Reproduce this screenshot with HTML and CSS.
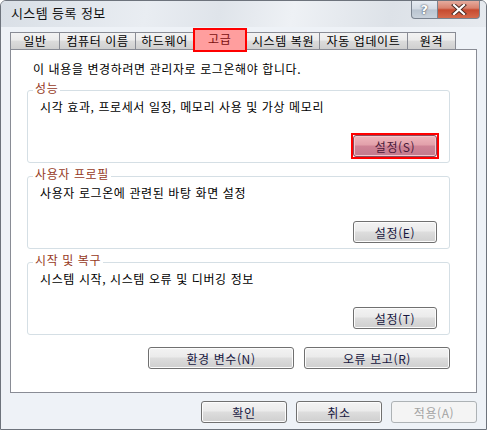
FILE: index.html
```html
<!DOCTYPE html>
<html lang="ko">
<head>
  <meta charset="UTF-8" />
  <title>시스템 등록 정보</title>
  <link rel="stylesheet" href="styles.css">
</head>
<body>
  <div class="window">
    <div class="titlebar">
      <span class="title">시스템 등록 정보</span>
      <div class="caption">
        <div class="cap-btn cap-help">?</div>
        <div class="cap-btn cap-close">
          <svg width="16" height="11" viewBox="0 0 16 11">
            <path d="M3 1 L13 10 M13 1 L3 10" stroke="#4a2a22" stroke-width="4" stroke-linecap="square" fill="none"/>
            <path d="M3 1 L13 10 M13 1 L3 10" stroke="#fff" stroke-width="2.2" stroke-linecap="square" fill="none"/>
          </svg>
        </div>
      </div>
    </div>

    <div class="client">
      <div class="tabs">
        <div class="tab w1">일반</div>
        <div class="tab w2">컴퓨터 이름</div>
        <div class="tab w3">하드웨어</div>
        <div class="tab w4 active">고급</div>
        <div class="tab w5">시스템 복원</div>
        <div class="tab w6">자동 업데이트</div>
        <div class="tab w7">원격</div>
      </div>

      <div class="panel">
        <div class="intro">이 내용을 변경하려면 관리자로 로그온해야 합니다.</div>

        <div class="group">
          <div class="group-title">성능</div>
          <div class="group-text">시각 효과, 프로세서 일정, 메모리 사용 및 가상 메모리</div>
          <div class="group-actions">
            <span class="focus-ring"><button class="btn btn-hot">설정(S)</button></span>
          </div>
        </div>

        <div class="group">
          <div class="group-title">사용자 프로필</div>
          <div class="group-text">사용자 로그온에 관련된 바탕 화면 설정</div>
          <div class="group-actions">
            <button class="btn">설정(E)</button>
          </div>
        </div>

        <div class="group">
          <div class="group-title">시작 및 복구</div>
          <div class="group-text">시스템 시작, 시스템 오류 및 디버깅 정보</div>
          <div class="group-actions">
            <button class="btn">설정(T)</button>
          </div>
        </div>

        <div class="panel-actions">
          <button class="btn btn-wide">환경 변수(N)</button>
          <button class="btn btn-wide">오류 보고(R)</button>
        </div>
      </div>

      <div class="footer">
        <button class="btn btn-dlg">확인</button>
        <button class="btn btn-dlg">취소</button>
        <button class="btn btn-dlg" disabled>적용(A)</button>
      </div>
    </div>
  </div>
</body>
</html>
```

FILE: styles.css
```css
* {
  box-sizing: border-box;
}
body {
  margin: 0;
  background: #ffffff;
  font-family: "Noto Sans CJK KR", "DejaVu Sans", sans-serif;
  font-size: 12px;
  letter-spacing: 0.6px;
  color: #000;
}

.window {
  width: 487px;
  height: 430px;
  border: 1px solid #6d737c;
  border-radius: 6px 6px 0 0;
  background: #eef2f7;
  overflow: hidden;
}

.titlebar {
  height: 26px;
  display: flex;
  justify-content: space-between;
  align-items: flex-start;
  background: linear-gradient(100deg, #d9dfe6 0%, #e9edf2 30%, #dfe4ea 45%, #eef1f5 60%, #dde2e8 80%, #e6eaef 100%);
}
.title {
  padding: 4px 0 0 10px;
  line-height: 16px;
  font-size: 13px;
  letter-spacing: 0.4px;
  color: #111;
}
.caption {
  display: flex;
  margin-right: 6px;
  margin-top: -1px;
}
.cap-btn {
  height: 19px;
  display: flex;
  align-items: center;
  justify-content: center;
  border: 1px solid #7a838f;
  border-top: none;
}
.cap-help {
  width: 27px;
  border-radius: 0 0 0 4px;
  background: linear-gradient(#e9eef4 0%, #d3dbe4 50%, #b9c4d0 55%, #c9d2dc 100%);
  color: #fff;
  font-family: "DejaVu Sans", sans-serif;
  font-weight: bold;
  font-size: 13px;
  text-shadow: 0 0 2px #4b5563, 0 0 1px #4b5563;
}
.cap-close {
  width: 42px;
  border-left: none;
  border-radius: 0 0 4px 0;
  background: linear-gradient(#e7b1a4 0%, #d9826e 45%, #c64a2f 55%, #d66a4c 100%);
}

.client {
  padding: 5px 9px 0 9px;
}

.tabs {
  display: flex;
  height: 17px;
  position: relative;
  z-index: 1;
}
.tab {
  height: 17px;
  margin-right: -1px;
  border: 1px solid #898c95;
  border-bottom: none;
  background: linear-gradient(#f3f3f3 0%, #ebebeb 45%, #dcdcdc 50%, #cfcfcf 100%);
  line-height: 16px;
  text-align: center;
  white-space: nowrap;
}
.w1 { width: 50px; }
.w2 { width: 77px; }
.w3 { width: 59px; }
.w4 { width: 54px; }
.w5 { width: 74px; }
.w6 { width: 89px; }
.w7 { width: 49px; }
.tab.active {
  height: 24px;
  margin-top: -4px;
  border: 2px solid #ff0000;
  background: #ff9e9e;
  color: #7a1010;
  line-height: 18px;
  text-align: left;
  padding-left: 13px;
  position: relative;
  z-index: 2;
}

.panel {
  height: 344px;
  border: 1px solid #898c95;
  background: #ffffff;
  padding: 11px 0 0 16px;
}
.intro {
  line-height: 16px;
  padding-left: 6px;
}

.group {
  width: 423px;
  margin-top: 13px;
  border: 1px solid #d5dfe5;
  border-radius: 3px;
  padding: 0 12px 5px 12px;
}
.group-title {
  width: fit-content;
  margin: -11px 0 0 -7px;
  padding: 0 2px;
  background: #fff;
  color: #96391d;
  line-height: 16px;
}
.group-text {
  margin-top: 3px;
  line-height: 16px;
}
.group-actions {
  display: flex;
  justify-content: flex-end;
  margin-top: 20px;
}

.btn {
  height: 22px;
  width: 84px;
  padding: 0;
  border: 1px solid #707070;
  border-radius: 3px;
  background: linear-gradient(#f3f3f3 0%, #ebebeb 45%, #dddddd 50%, #cfcfcf 100%);
  box-shadow: inset 0 0 0 1px #fcfcfc;
  font-family: "Noto Sans CJK KR", "DejaVu Sans", sans-serif;
  font-size: 12px;
  letter-spacing: 0.6px;
  color: #17173f;
}
.btn:disabled {
  border-color: #adb2b5;
  background: #f4f4f4;
  box-shadow: none;
  color: #a3a3a3;
}
.focus-ring {
  display: flex;
  margin: -2px -2px -2px 0;
  border: 2px solid #ff0000;
}
.btn-hot {
  border-color: #8a4a5c;
  background: linear-gradient(#efb6bc 0%, #e2a0aa 45%, #cf8496 50%, #c27a8e 100%);
  box-shadow: inset 0 0 0 1px #f4c8cc;
  color: #4a1a3a;
}

.panel-actions {
  width: 423px;
  display: flex;
  justify-content: flex-end;
  gap: 10px;
  margin-top: 12px;
}
.btn-wide {
  width: 146px;
}

.footer {
  display: flex;
  justify-content: flex-end;
  gap: 9px;
  margin-top: 8px;
}
.btn-dlg {
  width: 86px;
}
```
